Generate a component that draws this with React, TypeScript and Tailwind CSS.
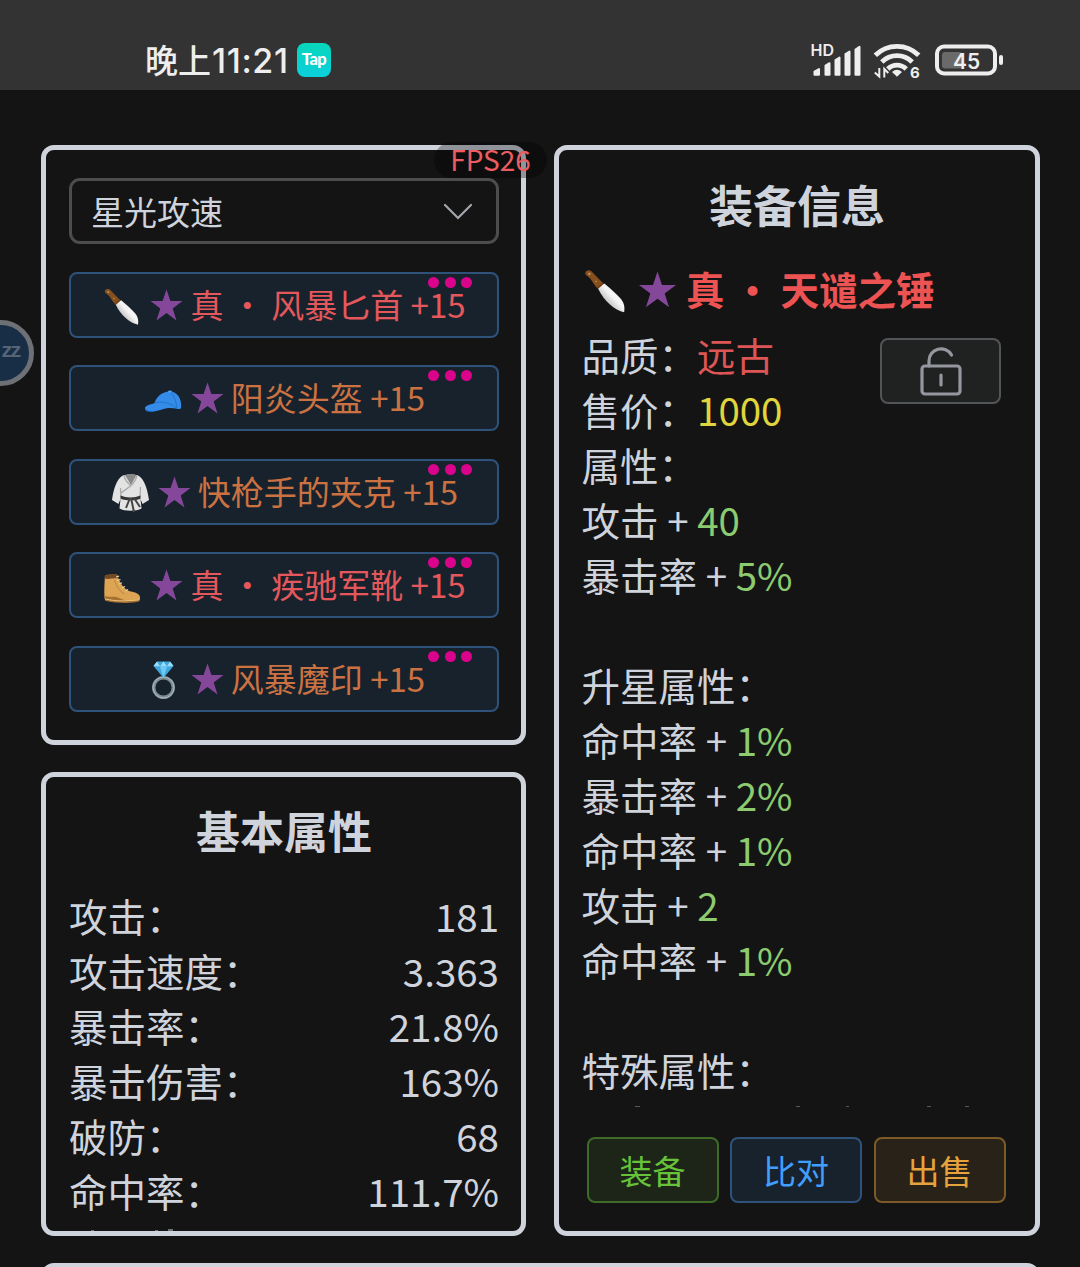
import React, { FC, ReactNode } from "react";

const Star: FC<{ className: string }> = ({ className }) => (
	<svg viewBox="0 0 33 32" className={className} fill="#85479a">
		<path d="M16.5 0.5l3.9 11.6h12.1l-9.8 7.3 3.8 12-10-7.3-10 7.3 3.8-12L.5 12.1h12.1z" />
	</svg>
);

const Knife = () => (
	<svg viewBox="0 0 41 41" className="w-full h-full">
		<defs>
			<linearGradient id="blade" x1="0" y1="1" x2="1" y2="0">
				<stop offset="0.35" stopColor="#c8c8c8" />
				<stop offset="0.55" stopColor="#f5f5f5" />
			</linearGradient>
		</defs>
		<path
			d="M2.800 4C3.500 2 6 1.500 7.800 2.500L18.500 13.500l-4.200 4.300C10.500 16 9.500 11 5.600 7.600 4 6.500 2.500 5.500 2.800 4z"
			fill="#85501d"
		/>
		<path d="M17.300 12.300l1.700 1.700-4.500 4.300-1.800-1.600z" fill="#6f3f12" />
		<path d="M13.800 17.800l5.300-4.500c5 4.200 10.500 9 14.200 13.200 2.700 3.200 3.400 7 2.700 11.200C28 36.500 18.500 28 13.800 17.800z" fill="url(#blade)" />
		<circle cx="6.300" cy="5" r="1" fill="#c49a6a" />
		<circle cx="12" cy="11.500" r=".7" fill="#c49a6a" />
	</svg>
);

const Cap = () => (
	<svg viewBox="0 0 41 41" className="w-full h-full">
		<path d="M2 29c0-3 3-4.500 9-5.500l9 3c-1 3-7 5.500-12 5.500-3.500 0-6-1-6-3z" fill="#1a66b8" />
		<path d="M2 27.500c2-2.500 6-2.500 9.500-4.500 2-6.500 8-11.500 15-11.500 8 0 12.300 7 11.600 16-.1 1.200-1.500 1.700-3 1.500-5-.8-10-1.500-14.500 0-4 1.400-9 2-12 2C4.500 31 2 30 2 27.500z" fill="#348be8" />
		<path d="M12 23c5-2 15-1 22 5.500M27 11.500c4 4 6.500 10 6.800 17" fill="none" stroke="#2072c8" strokeWidth=".9" />
		<ellipse cx="27" cy="11.600" rx="2" ry="1" fill="#48a4fa" />
	</svg>
);

const Robe = () => (
	<svg viewBox="0 0 41 41" className="w-full h-full">
		<path d="M12 3c4-2 14-2 17 0 5 3 8.500 13 10 24l-6.500 4-2-5 1 9.500c-5 3-17 3-22 0l1-9.500-2 5L2 27C3.500 16 7 6 12 3z" fill="#e3e3e3" />
		<path d="M15 2c4-1.200 8-1.200 11.500 0L21 12z" fill="#888" />
		<path d="M14 2.500c1 5 4 8 7.500 10.500M27 2.500C25 12 17 15 11 20M10.500 15l.5 9M30.500 14l-.5 10" fill="none" stroke="#aaa" strokeWidth="1.300" />
		<path d="M10.500 22.500c6 2.500 14 2.500 20 0v3.200c-6 2-14 2-20 0z" fill="#363636" />
		<path d="M20 25l-4 10M21 25l3 14M24 25l6 9" stroke="#444" strokeWidth="2" />
	</svg>
);

const Boot = () => (
	<svg viewBox="0 0 41 41" className="w-full h-full">
		<path d="M3 8.500l12-1c3 9 7 15.500 14 17 6 1 9.800 3.300 9 7.500-3 3-11 3-18 2.500C12 34 6 33 2.500 31.500 2 23 2.500 16 3 8.500z" fill="#dda453" />
		<path d="M3 8.500c4-1.700 8-1.700 12-1l1 4c-5-.6-9 1.200-13.500 0z" fill="#734926" />
		<path d="M2.500 29c5 2 10-1 16 2.500 5 3 13 2 19.300.5l-.3 2.300c-7 2.500-23 2-34.500-.6z" fill="#a7702e" />
		<path d="M3 32c8 1.500 15 3 34.500.7" fill="none" stroke="#efc786" strokeWidth="1" />
		<path d="M14 10l3-.8M15 13.500l3.500-1M17 17l3-1.200M20 21l3-1.500M23.500 24l2.500-1.500" stroke="#e9d3a4" strokeWidth="1.200" />
		<path d="M12.500 13c2 7 6 12 10 14" fill="none" stroke="#b98440" strokeWidth="1" />
	</svg>
);

const Ring = () => (
	<svg viewBox="0 0 41 41" className="w-full h-full">
		<circle cx="20.500" cy="27.500" r="9.800" fill="none" stroke="#7d8e94" strokeWidth="3.400" />
		<circle cx="20.500" cy="27.500" r="10.500" fill="none" stroke="#aebbc0" strokeWidth="1" />
		<path d="M14 1.500h13l3.500 4.500L20.500 18l-10-12z" fill="#3fa7dc" />
		<path d="M14 1.500L17 6.500l3.500-5L24 6.500l3-5 3.500 4.500-6.500.5-7 0-6.500-.5z" fill="#9addf8" />
		<path d="M17 6.500h7l-3.500 11.500z" fill="#6fc9f1" />
	</svg>
);

type Item = { icon: ReactNode; prefix?: boolean; name: string; color: string };

const items: Item[] = [
	{ icon: <Knife />, prefix: true, name: "风暴匕首", color: "text-[#e4585c]" },
	{ icon: <Cap />, name: "阳炎头盔", color: "text-[#cc7242]" },
	{ icon: <Robe />, name: "快枪手的夹克", color: "text-[#cc7242]" },
	{ icon: <Boot />, prefix: true, name: "疾驰军靴", color: "text-[#e4585c]" },
	{ icon: <Ring />, name: "风暴魔印", color: "text-[#cc7242]" },
];

const stats = [
	["攻击：", "181"],
	["攻击速度：", "3.363"],
	["暴击率：", "21.8%"],
	["暴击伤害：", "163%"],
	["破防：", "68"],
	["命中率：", "111.7%"],
];

const upgrades = [
	["命中率", "1%"],
	["暴击率", "2%"],
	["命中率", "1%"],
	["攻击", "2"],
	["命中率", "1%"],
];

const StatusBar = () => (
	<div className="h-[90px] bg-[#333] flex items-start justify-between pl-[145px] pr-[76px] text-[#eee]">
		<div className="flex items-center h-[60px] mt-[30px]">
			<span className="text-[33px] font-medium">晚上</span>
			<span className="text-[34px] font-medium font-[Inter] w-[77px] ml-[1px] tracking-[0.6px] whitespace-nowrap">11:21</span>
			<span className="ml-[8px] w-[34px] h-[34px] rounded-[8px] bg-linear-to-b from-[#08d7bb] to-[#0ccfdc] flex items-center justify-center text-[16.500px] leading-[32px] pb-[2px] font-black font-[Lato] text-white tracking-[-0.5px]">
				Tap
			</span>
		</div>
		<svg width="194" height="44" viewBox="810 38 194 44" className="mt-[38px]" fill="#eee">
			<text x="810.500" y="56" fontSize="16" fontWeight="600" fontFamily="Inter">HD</text>
			<g stroke="#eee" strokeWidth="2" strokeLinejoin="round">
				<path d="M814.500 71.500l4.500-2.500v5.700h-4.500zM825.500 65.500l4-2.300v11.500h-4zM835.500 60l4-2.500v17.200h-4zM845.500 54l4-2.500v23.200h-4zM855.500 49.500l4-2.800v28h-4z" />
			</g>
			<g fill="none" stroke="#eee" strokeWidth="4.800">
				<path d="M875.300 55.300a30.700 30.700 0 0 1 43.400 0" />
				<path d="M881.800 62a21.500 21.500 0 0 1 30.400 0" />
				<path d="M887.800 69a13 13 0 0 1 18.400 0" />
			</g>
			<path d="M892 72q5-4.500 10 0l-5 4.800z" />
			<path d="M879.300 68v8.500l-4.500-4M884.300 77.500v-8.500l4 4" fill="none" stroke="#eee" strokeWidth="2" />
			<text x="910" y="78" fontSize="15" fontWeight="700" fontFamily="Inter">6</text>
			<rect x="937" y="46.500" width="58" height="27" rx="7" fill="none" stroke="#eee" strokeWidth="4" />
			<rect x="942" y="52" width="20" height="16.500" rx="3" fill="#6a6a6a" />
			<rect x="999" y="55" width="4" height="10" rx="2" />
			<text x="966.500" y="68.500" fontSize="21" fontWeight="600" fontFamily="Inter" textAnchor="middle">45</text>
		</svg>
	</div>
);

const EquipRow: FC<Item> = ({ icon, prefix, name, color }) => (
	<div className="relative h-[66px] rounded-[8px] border-2 border-[#2f527b] bg-[#18222c] flex items-center justify-center">
		<span className="w-[41px] h-[41px] mr-[7px] mt-[4px]">{icon}</span>
		<Star className="w-[33px] h-[32px] mr-[7px]" />
		<span className={`text-[33px] leading-[60px] mt-[-2px] whitespace-pre ${color}`}>
			{prefix && "真 ・ "}
			{name} +15
		</span>
		<div className="absolute top-[3px] right-[25px] flex gap-[5.500px]">
			<i className="w-[11px] h-[11px] rounded-full bg-[#d9048b]" />
			<i className="w-[11px] h-[11px] rounded-full bg-[#d9048b]" />
			<i className="w-[11px] h-[11px] rounded-full bg-[#d9048b]" />
		</div>
	</div>
);

const Attr: FC<{ label: string; value: string }> = ({ label, value }) => (
	<p>
		{label} + <span className="text-[#8ccb70]">{value}</span>
	</p>
);

const App: FC = () => {
	return (
		<div className="relative w-[1080px] h-[1267px] overflow-hidden bg-[#141414] text-[#cfd3dc] font-['Noto_Sans_CJK_SC',sans-serif]">
			<StatusBar />
			<main className="pt-[55px] pl-[41px] pr-[40px]">
				<div className="flex justify-between h-[1091px]">
					<div className="w-[485px] flex flex-col gap-[27px]">
						<section className="relative h-[600px] border-[5px] border-[#cfd3dc] rounded-[13px] pl-[23px] pr-[22px] pt-[28px]">
							<div className="h-[66px] border-[3px] border-[#4c4d4f] rounded-[11px] flex items-center justify-between pl-[19px] pr-[23px]">
								<span className="text-[33px] leading-[60px]">星光攻速</span>
								<svg width="30" height="18" viewBox="0 0 30 18" fill="none" stroke="#a3a6ad" strokeWidth="2.200" strokeLinecap="round" className="mt-[2px]">
									<path d="M2 2l13 13L28 2" />
								</svg>
							</div>
							<div className="mt-[28px] flex flex-col gap-[27.400px]">
								{items.map((item) => (
									<EquipRow key={item.name} {...item} />
								))}
							</div>
							<div className="absolute top-[-8px] right-[-26px] w-[113px] h-[36px] rounded-full bg-black/30 text-[#ec5d61] text-[28px] leading-[34px] text-center">
								FPS26
							</div>
						</section>
						<section className="h-[464px] border-[5px] border-[#cfd3dc] rounded-[13px] pl-[23px] pr-[22px] overflow-hidden">
							<h2 className="text-[44px] leading-[60px] font-bold text-center mt-[23px]">基本属性</h2>
							<div className="mt-[28px] text-[38.500px] leading-[55px]">
								{stats.map(([label, value]) => (
									<div key={label} className="flex justify-between">
										<span>{label}</span>
										<span>{value}</span>
									</div>
								))}
							</div>
							{/* tops of the row scrolled out of view */}
							<svg width="120" height="2" className="mt-[11px]" fill="#6f7176">
								<path d="M22 1h3v1h-3zM86 1h3v1h-3zM99 0h5v2h-5z" />
							</svg>
						</section>
					</div>

					<section className="w-[486px] border-[5px] border-[#cfd3dc] rounded-[13px] pl-[23px] pr-[23px]">
						<h2 className="text-[44px] leading-[60px] font-bold text-center mt-[24px]">装备信息</h2>
						<div className="h-[876px] mt-[27px] text-[38.500px] leading-[55px] overflow-hidden">
							<div className="flex items-center font-bold text-[#ed5353] h-[55px] whitespace-pre">
								<span className="w-[48px] h-[48px] mr-[8px] mt-[6px]">
									<Knife />
								</span>
								<Star className="w-[39px] h-[37px] mr-[9px] mt-[2px]" />
								<span>真 ・ 天谴之锤</span>
							</div>
							<div className="flex justify-between mt-[11px] ml-[-0.500px]">
								<div>
									<p>
										品质：<span className="text-[#dd5555]">远古</span>
									</p>
									<p>
										售价：<span className="text-[#e0d53c]">1000</span>
									</p>
								</div>
								<button className="w-[121px] h-[66px] mr-[11px] mt-[11px] border-2 border-[#525457] rounded-[8px] bg-[#202121] flex items-center justify-center">
									<svg width="44" height="50" viewBox="0 0 44 50" fill="none" stroke="#94979d" strokeWidth="3.200" strokeLinecap="round">
										<rect x="3" y="20" width="38" height="28" rx="3" />
										<path d="M10 20v-5a12 12 0 0 1 22.500-6M22 29v10" />
									</svg>
								</button>
							</div>
							<div className="ml-[-0.500px]">
								<p>属性：</p>
								<Attr label="攻击" value="40" />
								<Attr label="暴击率" value="5%" />
								<p className="mt-[55px]">升星属性：</p>
								{upgrades.map(([label, value], i) => (
									<Attr key={i} label={label} value={value} />
								))}
								<p className="mt-[55px]">特殊属性：</p>
							</div>
							<svg width="420" height="2" className="mt-[9px]" fill="#55575b">
								<path d="M53 0h5v1h-5zM214 0h4v1h-4zM264 0h3v1h-3zM345 0h4v1h-4zM383 0h4v1h-4z" />
							</svg>
						</div>
						<div className="flex justify-center gap-[11.500px] mr-[2px] text-[33px] leading-[60px] text-center">
							<button className="w-[132px] h-[66px] border-2 border-[#3e6b27] rounded-[8px] bg-[#1c2518] text-[#67c23a]">装备</button>
							<button className="w-[132px] h-[66px] border-2 border-[#2f527b] rounded-[8px] bg-[#18222c] text-[#409eff]">比对</button>
							<button className="w-[132px] h-[66px] border-2 border-[#7d5b28] rounded-[8px] bg-[#292218] text-[#e6a23c]">出售</button>
						</div>
					</section>
				</div>
				<section className="mt-[27px] h-[80px] border-[5px] border-[#cfd3dc] rounded-[13px]" />
			</main>

			{/* floating assist ball, half hidden behind the screen edge */}
			<div className="absolute left-[-32px] top-[320px] w-[66px] h-[66px] rounded-full border-[5px] border-[#6d7074] bg-[#182d46] flex items-center justify-end pr-[10px] pb-[3px] text-[20px] font-bold font-['Liberation_Mono'] text-[#566478] tracking-[-3px]">
				zz
			</div>
		</div>
	);
};

export default App;
